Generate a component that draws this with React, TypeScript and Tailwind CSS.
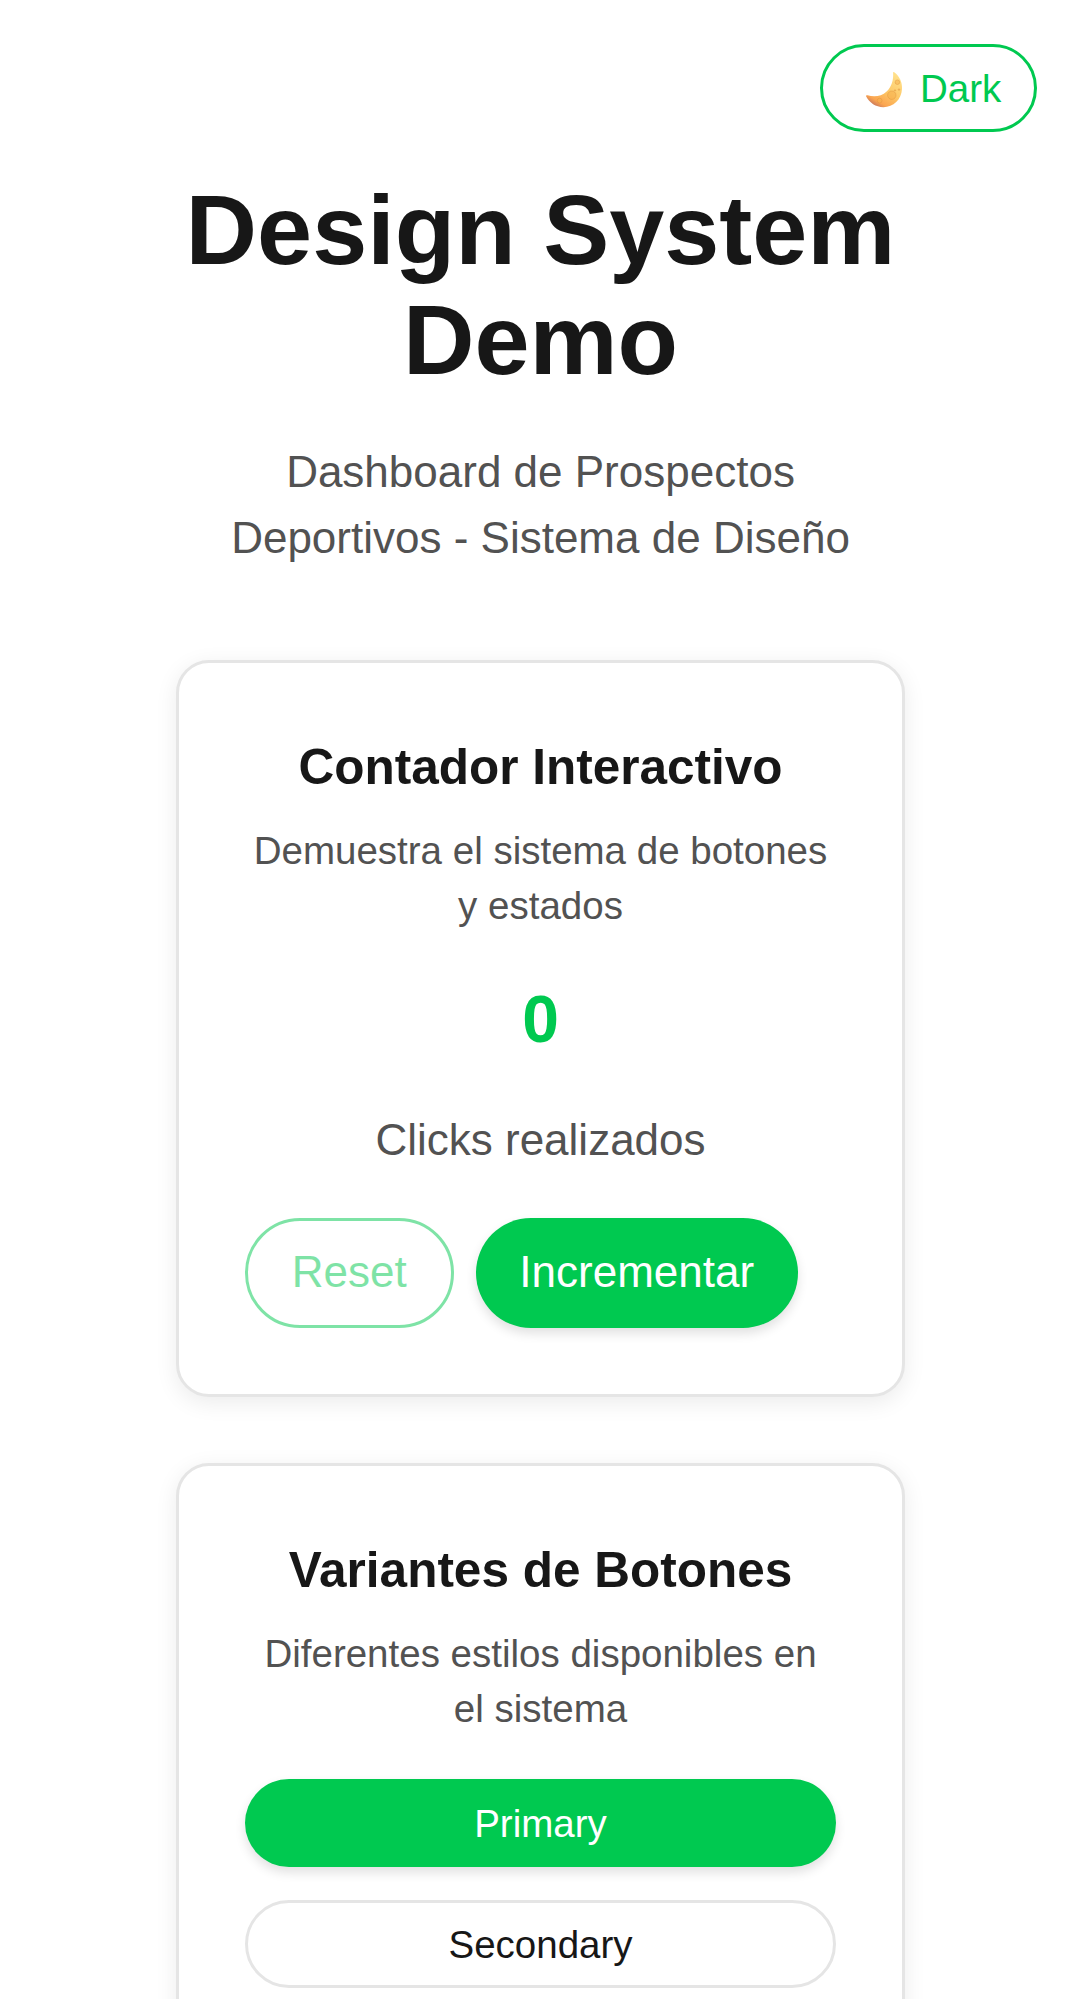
import { useState, type ReactNode } from "react";

function Moon() {
  return (
    <svg viewBox="0 0 38 38" className="mt-1 h-[38px] w-[38px] shrink-0" aria-hidden="true">
      <defs>
        <linearGradient id="moon-body" x1="0.85" y1="0.1" x2="0.3" y2="1">
          <stop offset="0" stopColor="#ffe08a" />
          <stop offset="0.5" stopColor="#fdc766" />
          <stop offset="0.85" stopColor="#fba550" />
          <stop offset="1" stopColor="#c9785c" />
        </linearGradient>
      </defs>
      <path
        d="M29.2 1.2C34.5 5.2 37.4 11 37 18C36.4 28.6 28.4 36.2 18.4 36.2C10.8 36.2 4.4 31.8 1.2 25.6C0.7 24.5 1.5 23.9 2.6 24.3C8.6 26.2 16.2 25.8 21.6 20.6C26.8 15.6 28.6 8.8 28.1 2C28 1 28.5 0.7 29.2 1.2Z"
        fill="url(#moon-body)"
      />
      <g fill="#f5b04f" fillOpacity="0.55" stroke="#dc923c" strokeOpacity="0.5" strokeWidth="0.8">
        <circle cx="26.8" cy="24.2" r="4.2" />
        <circle cx="32.4" cy="11.2" r="2.3" />
        <circle cx="14.6" cy="29.6" r="2.4" />
        <circle cx="34" cy="18.6" r="0.8" />
        <circle cx="30" cy="19.4" r="0.7" />
      </g>
    </svg>
  );
}

function Card({ title, text, children }: { title: string; text: string; children: ReactNode }) {
  return (
    <section className="rounded-[33px] border-[3px] border-[#e5e5e5] bg-white p-[65.75px] shadow-[0_5.5px_22px_rgba(0,0,0,0.08)]">
      <h3 className="text-center text-[49.5px] leading-[75px] font-bold text-[#171717]">{title}</h3>
      <p className="mt-[19.5px] mb-[43px] text-center text-[38.5px] leading-[55px] text-[#525252]">{text}</p>
      {children}
    </section>
  );
}

export default function App() {
  const [count, setCount] = useState(0);
  return (
    <div className="h-[1999px] overflow-hidden bg-white font-['Liberation_Sans',Arial,sans-serif] text-[#171717]">
      <header className="flex justify-end px-11 pt-11">
        <button className="flex h-[88px] w-[217.5px] items-center gap-[17.5px] rounded-full border-[3px] border-[#00c950] pl-[42px] text-[38.5px] leading-[55px] text-[#00c950]">
          <Moon />
          <span>Dark</span>
        </button>
      </header>
      <main className="mx-auto w-[729px] pt-[43px]">
        <h1 className="text-center text-[99px] leading-[110px] font-bold">
          Design System
          <br />
          Demo
        </h1>
        <p className="mt-[44px] mb-[89px] text-center text-[44px] leading-[66px] text-[#525252]">
          Dashboard de Prospectos
          <br />
          Deportivos - Sistema de Diseño
        </p>
        <div className="flex flex-col gap-[66px]">
          <Card title="Contador Interactivo" text="Demuestra el sistema de botones y estados">
            <div className="text-center text-[66px] leading-[86px] font-bold text-[#00c950]">{count}</div>
            <p className="mt-[45px] mb-[45px] text-center text-[44px] leading-[66px] text-[#525252]">Clicks realizados</p>
            <div className="flex gap-[22px] text-[44px] leading-[66px]">
              <button
                disabled={count === 0}
                onClick={() => setCount(0)}
                className="h-[110px] w-[209px] rounded-full border-[3px] border-[#00c950] pb-[2px] text-[#00c950] disabled:opacity-50"
              >
                Reset
              </button>
              <button
                onClick={() => setCount(count + 1)}
                className="h-[110px] w-[322px] rounded-full bg-[#00c950] pb-[2px] text-white shadow-[0_5.5px_11px_rgba(0,0,0,0.12)]"
              >
                Incrementar
              </button>
            </div>
          </Card>
          <Card title="Variantes de Botones" text="Diferentes estilos disponibles en el sistema">
            <div className="flex flex-col gap-[33px] text-[38.5px] leading-[55px]">
              <button className="h-[88px] rounded-full bg-[#00c950] text-white shadow-[0_5.5px_11px_rgba(0,0,0,0.12)]">
                Primary
              </button>
              <button className="h-[88px] rounded-full border-[3px] border-[#e5e5e5] bg-white text-[#171717]">
                Secondary
              </button>
            </div>
          </Card>
        </div>
      </main>
    </div>
  );
}
